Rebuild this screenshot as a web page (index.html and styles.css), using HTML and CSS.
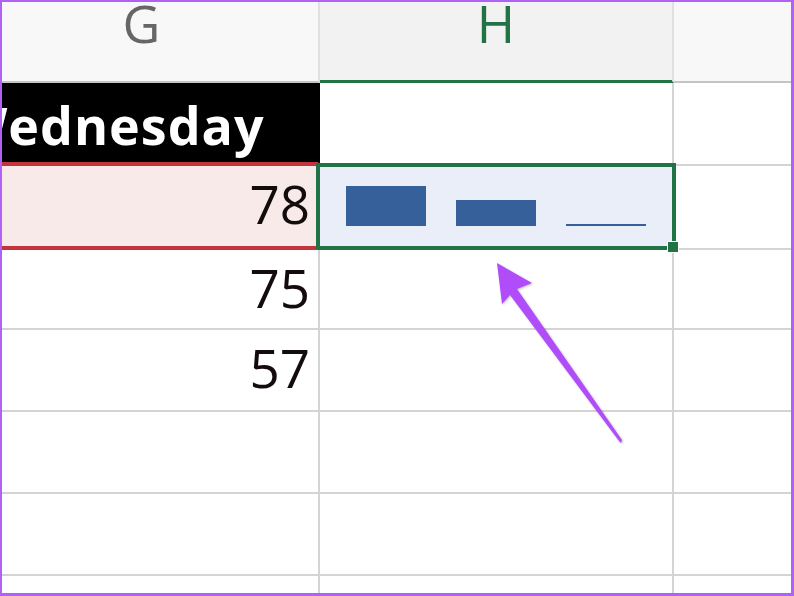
FILE: index.html
```html
<!DOCTYPE html>
<html>
  <head>
    <link rel="stylesheet" href="styles.css">
  </head>
  <body>
    <div class="sheet">
      <div class="grid">
        <div class="col-head col-g">G</div>
        <div class="col-head col-h">H</div>
        <div class="col-head col-i"></div>

        <div class="cell day">Wednesday</div>
        <div class="cell"></div>
        <div class="cell last"></div>

        <div class="cell num hl">78</div>
        <div class="cell spark">
          <div class="bar" style="height: 40px"></div>
          <div class="bar" style="height: 26px"></div>
          <div class="bar" style="height: 2px"></div>
        </div>
        <div class="cell last"></div>

        <div class="cell num">75</div>
        <div class="cell"></div>
        <div class="cell last"></div>

        <div class="cell num">57</div>
        <div class="cell"></div>
        <div class="cell last"></div>

        <div class="cell"></div>
        <div class="cell"></div>
        <div class="cell last"></div>

        <div class="cell"></div>
        <div class="cell"></div>
        <div class="cell last"></div>

        <div class="cell end"></div>
        <div class="cell end"></div>
        <div class="cell end last"></div>
      </div>

      <svg class="arrow" width="794" height="596" viewBox="0 0 794 596">
        <polygon
          points="497,263 532,283 517,289 622,440 621,443 619,441 510,295 502,304"
        />
      </svg>
    </div>
  </body>
</html>
```

FILE: styles.css
```css
body {
  margin: 0;
  background-color: #ffffff;
}
.sheet {
  position: relative;
  width: 794px;
  height: 596px;
  box-sizing: border-box;
  border: 2px solid #b161f8;
  border-right-width: 3px;
  border-bottom-width: 3px;
  overflow: hidden;
  font-family: "Open Sans", "Liberation Sans", sans-serif;
}
.grid {
  display: grid;
  grid-template-columns: 318px 354px 1fr;
  grid-template-rows: 81px 83px 84px 80px 82px 82px 82px 1fr;
  height: 100%;
}
.col-head {
  box-sizing: border-box;
  border-right: 2px solid #e0e0e0;
  border-bottom: 2px solid #c4c4c4;
  background-color: #f8f8f8;
  font-size: 52px;
  line-height: 42px;
  text-align: center;
  color: #666666;
}
.col-g {
  padding-right: 37px;
}
.col-h {
  background-color: #f2f2f2;
  color: #217346;
  border-bottom-color: #217346;
  box-shadow: inset 0 -1px 0 #217346;
}
.col-i {
  border-right: none;
}
.cell {
  box-sizing: border-box;
  border-right: 2px solid #d4d4d4;
  border-bottom: 2px solid #d4d4d4;
}
.cell.last {
  border-right: none;
}
.cell.end {
  border-bottom: none;
}
.day {
  background-color: #000000;
  border-right-color: #000000;
  border-bottom: 4px solid #c3353d;
  color: #ffffff;
  font-weight: 700;
  font-size: 52px;
  line-height: 84px;
  letter-spacing: 1px;
  white-space: nowrap;
  overflow: hidden;
  text-indent: -45px;
}
.num {
  padding-right: 8px;
  text-align: right;
  font-size: 53px;
  line-height: 76px;
  color: #140c0c;
}
.hl {
  background-color: #f9eaea;
  border-bottom: 4px solid #c3353d;
}
.spark {
  position: relative;
  display: flex;
  align-items: flex-end;
  gap: 30px;
  padding: 0 0 22px 26px;
  background-color: #e9eef8;
}
.spark::before {
  content: "";
  position: absolute;
  top: -3px;
  left: -4px;
  right: -4px;
  bottom: -2px;
  border: 4px solid #217346;
}
.spark::after {
  content: "";
  position: absolute;
  right: -6px;
  bottom: -4px;
  width: 10px;
  height: 10px;
  background-color: #217346;
  outline: 1px solid #ffffff;
}
.bar {
  width: 80px;
  background-color: #36609a;
}
.arrow {
  position: absolute;
  top: -2px;
  left: -2px;
  pointer-events: none;
}
.arrow polygon {
  fill: #b14cfb;
  filter: drop-shadow(1px 1px 1px rgba(0, 0, 0, 0.25));
}
```
